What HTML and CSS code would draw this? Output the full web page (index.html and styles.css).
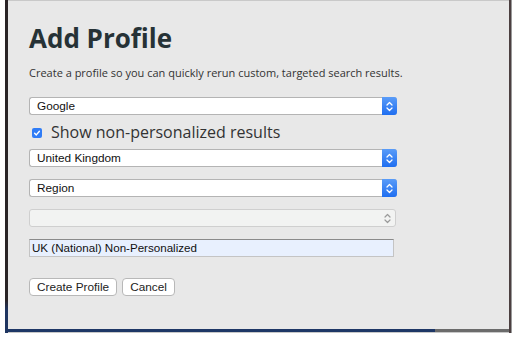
FILE: index.html
```html
<!DOCTYPE html>
<html>
<head>
<meta charset="utf-8">
<link rel="stylesheet" href="styles.css">
</head>
<body>
<div class="frame">
  <div class="edge-left"></div>
  <div class="dialog">
    <div class="content">
      <h1 class="title">Add Profile</h1>
      <p class="subtitle">Create a profile so you can quickly rerun custom, targeted search results.</p>

      <div class="select select-first">
        <span class="select-text">Google</span>
        <span class="stepper"><svg width="15" height="17" viewBox="0 0 15 17"><path d="M5 7 L7.5 4.5 L10 7 M5 10 L7.5 12.5 L10 10" fill="none" stroke="#fff" stroke-width="1.3" stroke-linecap="round" stroke-linejoin="round"/></svg></span>
      </div>

      <label class="check-row">
        <span class="checkbox"><svg width="10" height="10" viewBox="0 0 10 10"><path d="M2.6 5.2 L4.3 6.9 L7.4 3.2" fill="none" stroke="#fff" stroke-width="1.4" stroke-linecap="round" stroke-linejoin="round"/></svg></span>
        <span class="check-label">Show non-personalized results</span>
      </label>

      <div class="select">
        <span class="select-text">United Kingdom</span>
        <span class="stepper"><svg width="15" height="17" viewBox="0 0 15 17"><path d="M5 7 L7.5 4.5 L10 7 M5 10 L7.5 12.5 L10 10" fill="none" stroke="#fff" stroke-width="1.3" stroke-linecap="round" stroke-linejoin="round"/></svg></span>
      </div>

      <div class="select select-gap">
        <span class="select-text">Region</span>
        <span class="stepper"><svg width="15" height="17" viewBox="0 0 15 17"><path d="M5 7 L7.5 4.5 L10 7 M5 10 L7.5 12.5 L10 10" fill="none" stroke="#fff" stroke-width="1.3" stroke-linecap="round" stroke-linejoin="round"/></svg></span>
      </div>

      <div class="select select-gap select-disabled">
        <span class="select-text"></span>
        <span class="stepper stepper-disabled"><svg width="15" height="17" viewBox="0 0 15 17"><path d="M5 7 L7.5 4.5 L10 7 M5 10 L7.5 12.5 L10 10" fill="none" stroke="#9a9a9a" stroke-width="1.2" stroke-linecap="round" stroke-linejoin="round"/></svg></span>
      </div>

      <div class="text-input">UK (National) Non-Personalized</div>

      <div class="buttons">
        <button class="btn">Create Profile</button>
        <button class="btn">Cancel</button>
      </div>
    </div>
    <div class="bottom-edge"></div>
  </div>
  <div class="edge-right"></div>
</div>
</body>
</html>
```

FILE: styles.css
```css
html, body {
  margin: 0;
  padding: 0;
  background: #ffffff;
}

.frame {
  display: flex;
  margin-left: 5px;
  width: 507px;
  height: 333px;
}

.edge-left {
  width: 3px;
  background: linear-gradient(to bottom, #2a2426 0, #2a2426 300px, #1f3560 310px, #1f3560 100%);
}

.edge-right {
  width: 3px;
  background: linear-gradient(to right, #4b3f40 0, #4b3f40 2px, #9a9a9a 2px);
}

.dialog {
  flex: 1;
  display: flex;
  flex-direction: column;
  background: #e8e8e8;
  border-top: 1px solid #c9c9c9;
}

.content {
  flex: 1;
  padding-left: 21px;
}

.bottom-edge {
  height: 4px;
  background:
    linear-gradient(to bottom, transparent 0, transparent 3px, #c8c8c8 3px),
    linear-gradient(to right, #1e3766 0, #1e3766 427px, #6b6b6b 427px);
}

.title {
  margin: 20px 0 0;
  font-family: "Open Sans", sans-serif;
  font-weight: 700;
  font-size: 26px;
  line-height: 34px;
  color: #263236;
}

.subtitle {
  margin: 10px 0 0;
  font-family: "Open Sans", sans-serif;
  font-size: 11px;
  line-height: 15px;
  color: #333333;
}

.select {
  display: flex;
  align-items: stretch;
  box-sizing: border-box;
  width: 368px;
  height: 18px;
  background: #ffffff;
  border: 1px solid #b4b4b4;
  border-right: none;
  border-radius: 3px;
  font-family: "Liberation Sans", Arial, sans-serif;
  font-size: 11.8px;
  color: #111111;
}

.select-first {
  margin-top: 17px;
}

.select-gap {
  margin-top: 12px;
}

.select-text {
  flex: 1;
  padding-left: 7px;
  line-height: 16px;
}

.stepper {
  width: 15px;
  margin: -1px 0;
  display: flex;
  align-items: center;
  justify-content: center;
  background: linear-gradient(to bottom, #5a9cf8, #1f6ef0);
  border-radius: 0 3px 3px 0;
}

.select-disabled {
  background: #f2f3f2;
  border-color: #cfcfcf;
  border-right: 1px solid #cfcfcf;
  width: 367px;
}

.stepper-disabled {
  background: none;
  margin: 0;
}

.check-row {
  display: flex;
  align-items: center;
  margin: 6px 0 6px 3px;
  height: 22px;
}

.checkbox {
  width: 10px;
  height: 10px;
  border-radius: 2px;
  background: #2f7cf6;
  display: flex;
  align-items: center;
  justify-content: center;
  margin-top: 1px;
}

.check-label {
  margin-left: 9px;
  font-family: "Open Sans", sans-serif;
  font-size: 16px;
  line-height: 22px;
  color: #333333;
}

.text-input {
  box-sizing: border-box;
  width: 365px;
  height: 18px;
  margin-top: 12px;
  padding-left: 2px;
  background: #e8f0fe;
  border: 1px solid #c4c4c4;
  border-top-color: #8a8a8a;
  font-family: "Liberation Sans", Arial, sans-serif;
  font-size: 11.6px;
  line-height: 16px;
  color: #111111;
}

.buttons {
  display: flex;
  gap: 5px;
  margin-top: 21px;
}

.btn {
  box-sizing: border-box;
  height: 18px;
  padding: 0 7px;
  background: #ffffff;
  border: 1px solid #b8b8b8;
  border-radius: 4px;
  font-family: "Liberation Sans", Arial, sans-serif;
  font-size: 11.8px;
  line-height: 16px;
  color: #222222;
}
```
